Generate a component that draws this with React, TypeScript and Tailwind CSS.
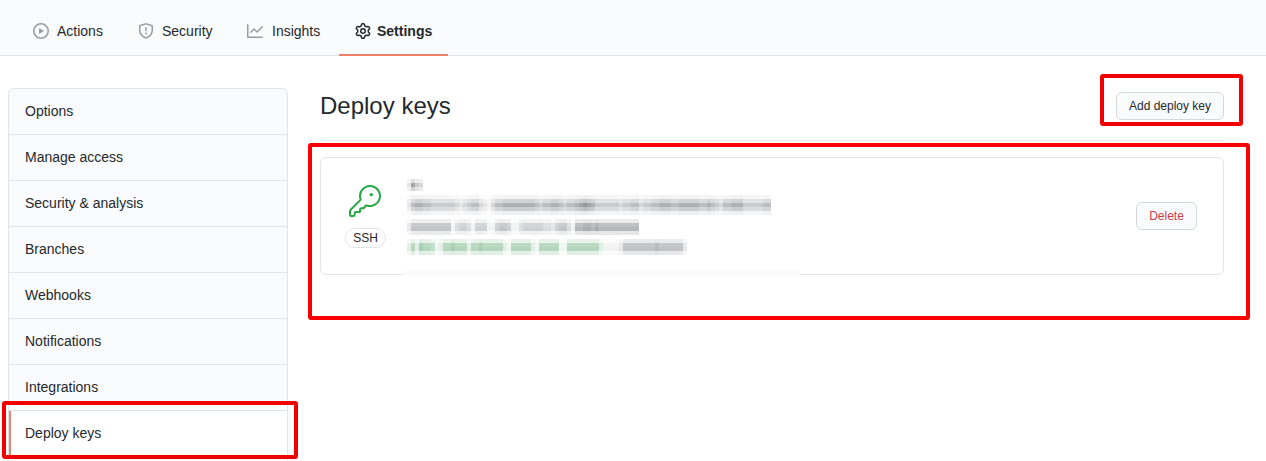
import React from "react";

const PLAY =
  "M1.5 8a6.5 6.5 0 1113 0 6.5 6.5 0 01-13 0zM8 0a8 8 0 100 16A8 8 0 008 0zM6.379 5.227A.25.25 0 006 5.442v5.117a.25.25 0 00.379.214l4.264-2.559a.25.25 0 000-.428L6.379 5.227z";
const SHIELD =
  "M7.467.133a1.75 1.75 0 011.066 0l5.25 1.68A1.75 1.75 0 0115 3.48V7c0 1.566-.32 3.182-1.303 4.682-.983 1.498-2.585 2.813-5.032 3.855a1.7 1.7 0 01-1.33 0c-2.447-1.042-4.049-2.357-5.032-3.855C1.32 10.182 1 8.566 1 7V3.48a1.75 1.75 0 011.217-1.667l5.25-1.68zm.61 1.429a.25.25 0 00-.153 0l-5.25 1.68a.25.25 0 00-.174.238V7c0 1.358.275 2.666 1.057 3.86.784 1.194 2.121 2.34 4.366 3.297a.2.2 0 00.154 0c2.245-.956 3.582-2.104 4.366-3.298C13.225 9.666 13.5 8.36 13.5 7V3.48a.25.25 0 00-.174-.237l-5.25-1.68zM9 10.5a1 1 0 11-2 0 1 1 0 012 0zm-.25-5.75a.75.75 0 10-1.5 0v3a.75.75 0 001.5 0v-3z";
const GRAPH =
  "M1.5 1.75a.75.75 0 00-1.5 0v12.5c0 .414.336.75.75.75h14.5a.75.75 0 000-1.5H1.5V1.75zm14.28 2.53a.75.75 0 00-1.06-1.06L10 7.94 7.53 5.47a.75.75 0 00-1.06 0L3.22 8.72a.75.75 0 001.06 1.06L7 7.06l2.47 2.47a.75.75 0 001.06 0l5.25-5.25z";
const GEAR =
  "M7.429 1.525a6.593 6.593 0 011.142 0c.036.003.108.036.137.146l.289 1.105c.147.56.55.967.997 1.189.174.086.341.183.501.29.417.278.97.423 1.53.27l1.102-.303c.11-.03.175.016.195.046.219.31.41.641.573.989.014.031.022.11-.059.19l-.815.806c-.411.406-.562.957-.53 1.456a4.588 4.588 0 010 .582c-.032.499.119 1.05.53 1.456l.815.806c.08.08.073.159.059.19a6.494 6.494 0 01-.573.99c-.02.029-.086.074-.195.045l-1.103-.303c-.559-.153-1.112-.008-1.529.27-.16.107-.327.204-.5.29-.449.222-.851.628-.998 1.189l-.289 1.105c-.029.11-.101.143-.137.146a6.613 6.613 0 01-1.142 0c-.036-.003-.108-.037-.137-.146l-.289-1.105c-.147-.56-.55-.967-.997-1.189a4.502 4.502 0 01-.501-.29c-.417-.278-.97-.423-1.53-.27l-1.102.303c-.11.03-.175-.016-.195-.046a6.492 6.492 0 01-.573-.989c-.014-.031-.022-.11.059-.19l.815-.806c.411-.406.562-.957.53-1.456a4.587 4.587 0 010-.582c.032-.499-.119-1.05-.53-1.456l-.815-.806c-.08-.08-.073-.159-.059-.19a6.44 6.44 0 01.573-.99c.02-.029.086-.075.195-.045l1.103.303c.559.153 1.112.008 1.529-.27.16-.107.327-.204.5-.29.449-.222.851-.628.998-1.189l.289-1.105c.029-.11.101-.143.137-.146zM8 0c-.236 0-.47.01-.701.03-.743.065-1.29.615-1.458 1.261l-.29 1.106c-.017.066-.078.158-.211.224a5.994 5.994 0 00-.668.386c-.123.082-.233.09-.3.071L3.27 2.776c-.644-.177-1.392.02-1.82.63a7.977 7.977 0 00-.704 1.217c-.315.675-.111 1.422.363 1.891l.815.806c.05.048.098.147.088.294a6.084 6.084 0 000 .772c.01.147-.038.246-.088.294l-.815.806c-.474.469-.678 1.216-.363 1.891.2.428.436.835.704 1.218.428.609 1.176.806 1.82.63l1.103-.303c.066-.019.176-.011.299.071.213.143.436.272.668.386.133.066.194.158.212.224l.289 1.106c.169.646.715 1.196 1.458 1.26a8.094 8.094 0 001.402 0c.743-.064 1.29-.614 1.458-1.26l.29-1.106c.017-.066.078-.158.211-.224a5.98 5.98 0 00.668-.386c.123-.082.233-.09.3-.071l1.102.302c.644.177 1.392-.02 1.82-.63.268-.382.505-.789.704-1.217.315-.675.111-1.422-.364-1.891l-.814-.806c-.05-.048-.098-.147-.088-.294a6.1 6.1 0 000-.772c-.01-.147.039-.246.088-.294l.814-.806c.475-.469.679-1.216.364-1.891a7.992 7.992 0 00-.704-1.218c-.428-.609-1.176-.806-1.82-.63l-1.103.303c-.066.019-.176.011-.299-.071a5.991 5.991 0 00-.668-.386c-.133-.066-.194-.158-.212-.224L10.16 1.29C9.99.645 9.444.095 8.701.031A8.094 8.094 0 008 0zm1.5 8a1.5 1.5 0 11-3 0 1.5 1.5 0 013 0zM11 8a3 3 0 11-6 0 3 3 0 016 0z";
const KEY =
  "M15.75 0a8.25 8.25 0 00-7.851 10.79L.513 18.178A1.75 1.75 0 000 19.414v2.836C0 23.217.784 24 1.75 24h1.5A1.75 1.75 0 005 22.25v-1a.25.25 0 01.25-.25h2.735a.75.75 0 00.545-.22l.214-.213A.875.875 0 009 19.948V18.5a.25.25 0 01.25-.25h1.086c.464 0 .91-.184 1.237-.513l1.636-1.636A8.25 8.25 0 1015.75 0zM9 8.25a6.75 6.75 0 114.288 6.287.75.75 0 00-.804.168l-1.971 1.972a.25.25 0 01-.177.073H9.25A1.75 1.75 0 007.5 18.5v1H5.25a1.75 1.75 0 00-1.75 1.75v1a.25.25 0 01-.25.25h-1.5a.25.25 0 01-.25-.25v-2.836a.25.25 0 01.073-.177l7.722-7.721a.75.75 0 00.168-.804A6.73 6.73 0 019 8.25z";

function Icon({ d, className }: { d: string; className: string }) {
  return (
    <svg viewBox="0 0 16 16" width="16" height="16" fill="currentColor" className={className}>
      <path fillRule="evenodd" d={d} />
    </svg>
  );
}

// Each mosaic line: top row, weight of each 4px row, and darkness digits for each 4px column.
type MosaicLine = { row: number; weights: number[]; cells: string; greenUntil: number };

const MOSAIC: MosaicLine[] = [
  { row: 0, weights: [0.35, 1, 0.5], cells: "2743", greenUntil: 0 },
  {
    row: 4,
    weights: [0.15, 0.55, 1, 0.65, 0.2],
    cells: "2566554444443234553213556666666654556654556787644444434455344556665566666556543556664444455552",
    greenUntil: 0,
  },
  {
    row: 10,
    weights: [0.25, 0.8, 0.9, 0.3],
    cells: "2555555555513443144411455411344444332455316677676666666666",
    greenUntil: 0,
  },
  {
    row: 15,
    weights: [0.3, 0.85, 0.9, 0.35],
    cells: "2526554125565552556555552155555215555511555555552111125555555565555552",
    greenUntil: 49,
  },
];

function RedactedDetails() {
  return (
    <svg width="384" height="80" viewBox="0 0 384 80" shapeRendering="crispEdges" className="shrink-0">
      {MOSAIC.flatMap((line) =>
        line.weights.flatMap((weight, r) =>
          line.cells.slice(0, 91).split("").map((digit, c) => (
            <rect
              key={`${line.row}-${r}-${c}`}
              x={c * 4}
              y={(line.row + r) * 4}
              width="4"
              height="4"
              fill={c < line.greenUntil ? "#22863a" : "#4a4d55"}
              fillOpacity={Number(digit) * weight * 0.073}
            />
          )),
        ),
      )}
    </svg>
  );
}

const MENU = [
  "Options",
  "Manage access",
  "Security & analysis",
  "Branches",
  "Webhooks",
  "Notifications",
  "Integrations",
  "Deploy keys",
];

export default function App() {
  return (
    <div className="relative h-[461px] w-[1266px] overflow-hidden bg-white font-['Liberation_Sans',sans-serif] text-sm text-[#24292e]">
      <nav className="flex h-14 border-b border-[#e1e4e8] bg-[#fafbfc] pl-[17px]">
        <a className="flex h-14 w-[105px] items-center pb-px pt-[7px] pl-4">
          <Icon d={PLAY} className="mr-2 text-[#959da5]" />
          Actions
        </a>
        <a className="flex h-14 w-[109px] items-center pb-px pt-[7px] pl-4">
          <Icon d={SHIELD} className="mr-2 text-[#959da5]" />
          Security
        </a>
        <a className="flex h-14 w-[108px] items-center pb-px pt-[7px] pl-4">
          <Icon d={GRAPH} className="mr-[9px] text-[#959da5]" />
          Insights
        </a>
        <a className="flex h-14 w-[109px] items-center border-b-2 border-[#f0806a] pt-[7px] pl-4 font-bold">
          <Icon d={GEAR} className="mr-[6px]" />
          Settings
        </a>
      </nav>

      <div className="flex pl-2">
        <aside className="mt-8 h-[380px] w-[280px] shrink-0 overflow-hidden rounded-t-md border border-b-0 border-[#e1e4e8] bg-[#fafbfc]">
          {MENU.map((label) =>
            label === "Deploy keys" ? (
              <div key={label} className="flex h-[46px] border-b border-[#e1e4e8] bg-white">
                <span className="w-0.5 bg-[#e3867a]" />
                <span className="flex items-center pb-0.5 pl-[14px]">{label}</span>
              </div>
            ) : (
              <div key={label} className="flex h-[46px] items-center border-b border-[#e1e4e8] pb-0.5 pl-4">
                {label}
              </div>
            ),
          )}
        </aside>

        <main className="ml-8 w-[904px]">
          <header className="mt-8 flex h-[53px] items-start justify-between border-b border-[#eaecef]">
            <h1 className="text-2xl leading-9">Deploy keys</h1>
            <button className="mt-1 h-7 w-[108px] rounded-md border border-[#d5d8da] bg-[#fafbfc] text-xs">
              Add deploy key
            </button>
          </header>

          <section className="relative mt-4 flex h-[118px] items-center rounded-md border border-[#e1e4e8]">
            <div className="ml-6 flex w-[41px] flex-col items-center">
              <svg viewBox="0 0 24 24" width="32" height="32" fill="#28a745" className="mr-px">
                <path fillRule="evenodd" d={KEY} />
                <circle cx="16.75" cy="7.25" r="1.25" />
              </svg>
              <span className="mt-[11px] flex h-5 w-[41px] items-center justify-center rounded-full border border-[#e1e4e8] text-xs">
                SSH
              </span>
            </div>
            <div className="ml-[21px] flex pt-[6px]">
              <RedactedDetails />
            </div>
            <button className="mr-[26px] ml-auto h-7 w-[61px] rounded-md border border-[#d5d8da] bg-[#fafbfc] text-xs text-[#cb3a46]">
              Delete
            </button>
            <div className="absolute -bottom-px left-[81px] h-1 w-[397px] bg-[#fafafa]" />
          </section>
        </main>
      </div>

      <div className="absolute top-[74px] left-[1100px] h-[52px] w-[143px] rounded-[3px] border-4 border-[#f00000]" />
      <div className="absolute top-[143px] left-[308px] h-[177px] w-[942px] rounded-[3px] border-4 border-[#fa0000]" />
      <div className="absolute top-[401px] left-[2px] h-[58px] w-[296px] rounded-[3px] border-4 border-[#f00000]" />
    </div>
  );
}
